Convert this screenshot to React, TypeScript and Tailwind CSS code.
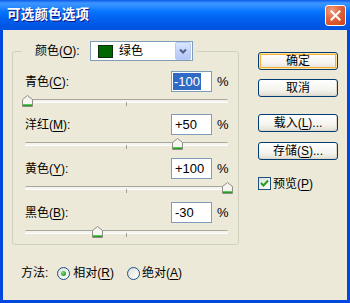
import React from "react";

const rows = [
  { label: "青色", k: "C", value: "-100", selected: true, thumb: "left-[-3px]", block: "h-[22px]" },
  { label: "洋红", k: "M", value: "+50", selected: false, thumb: "left-[147px]", block: "h-[23px]" },
  { label: "黄色", k: "Y", value: "+100", selected: false, thumb: "left-[197px]", block: "h-[23px]" },
  { label: "黑色", k: "B", value: "-30", selected: false, thumb: "left-[67px]", block: "h-[23px]" },
];

function Mn({ k }: { k: string }) {
  return (
    <>
      (<span className="underline underline-offset-[2px] decoration-[1px]">{k}</span>)
    </>
  );
}

function Thumb() {
  return (
    <svg width="11" height="12" viewBox="0 0 11 12">
      <path d="M0.5 4.5 L5.5 0.5 L10.5 4.5 V11.5 H0.5 Z" fill="#F6F5F0" stroke="#8E8D88" />
      <rect x="1" y="9" width="9" height="1" fill="#5CC65C" />
      <rect x="1" y="10" width="9" height="1" fill="#21A121" />
    </svg>
  );
}

function Btn({ children, def }: { children: React.ReactNode; def?: boolean }) {
  return (
    <div
      className={
        def
          ? "w-[80px] h-[18px] rounded-[3px] border border-[#003C74] flex items-center justify-center text-[12px] leading-none text-black bg-[linear-gradient(to_bottom,#FFFFFF_0%,#F5F4EF_60%,#E6E4DA_90%,#D6D0C5_100%)] shadow-[inset_0_0_0_1px_#FFE6A0,inset_0_0_0_2px_#F4B13E]"
          : "w-[80px] h-[18px] rounded-[3px] border border-[#003C74] flex items-center justify-center text-[12px] leading-none text-black bg-[linear-gradient(to_bottom,#FFFFFF_0%,#F5F4EF_60%,#E6E4DA_90%,#D6D0C5_100%)] shadow-[inset_-1px_-1px_0_#DCD8CB]"
      }
    >
      {children}
    </div>
  );
}

function Radio({ checked }: { checked?: boolean }) {
  return (
    <div className="w-[13px] h-[13px] rounded-full border border-[#1C5180] bg-[linear-gradient(135deg,#DCDCD7_0%,#F4F4F0_60%,#FFFFFF_100%)] flex items-center justify-center">
      {checked && (
        <div className="w-[5px] h-[5px] rounded-full bg-[radial-gradient(circle_at_35%_35%,#7BE07B_0%,#21A121_70%)]" />
      )}
    </div>
  );
}

export default function App() {
  return (
    <div className="w-[350px] h-[303px] flex flex-col bg-[#0348DC] font-['Liberation_Sans','Noto_Sans_CJK_SC',sans-serif] text-[12px] leading-none text-black overflow-hidden">
      {/* title bar */}
      <div className="h-[30px] shrink-0 flex items-center justify-between pl-[7px] pr-[4px] bg-[linear-gradient(to_bottom,#0A5AE8_0%,#3D95FF_10%,#2B8CFF_22%,#127DFF_32%,#036FFC_45%,#0262EE_62%,#0057E5_82%,#0053E0_100%)]">
        <span className="text-white font-bold text-[13.5px] tracking-[0.2px] [text-shadow:1px_1px_0_#0A1A8A]">
          可选颜色选项
        </span>
        <div className="w-[21px] h-[21px] rounded-[3px] border border-white bg-[radial-gradient(circle_at_30%_25%,#F0A080_0%,#E0643C_45%,#C8401C_100%)] flex items-center justify-center">
          <svg width="11" height="11" viewBox="0 0 11 11">
            <path d="M1.5 1.5 L9.5 9.5 M9.5 1.5 L1.5 9.5" stroke="white" strokeWidth="2" strokeLinecap="square" />
          </svg>
        </div>
      </div>

      {/* client */}
      <div className="mx-[3px] mb-[3px] h-[270px] bg-[#ECE9D8] flex items-start">
        {/* left column */}
        <div className="ml-[9px] mt-[11px] w-[227px] flex flex-col">
          <fieldset className="h-[204px] border border-[#D0D0BF] rounded-[3px] pl-[12px] pr-[10px] m-0 min-w-0">
            <legend className="ml-[-3px] pl-[13px] pr-[3px]">
              <div className="h-[20px] flex items-center">
                <span className="w-[55px]">
                  颜色<Mn k="O" />:
                </span>
                <div className="w-[103px] h-[20px] border border-[#7F9DB9] bg-white flex items-center">
                  <div className="ml-[7px] w-[15px] h-[13px] bg-[#006600] border border-[#0A2E0A]" />
                  <span className="ml-[6px]">绿色</span>
                  <div className="ml-auto mr-[1px] w-[16px] h-[18px] rounded-[2px] border border-[#B9CAF3] bg-[linear-gradient(to_bottom,#DCE6FD_0%,#C3D3FB_50%,#B4C7F5_100%)] flex items-center justify-center">
                    <svg width="8" height="6" viewBox="0 0 8 6">
                      <path d="M1 1.5 L4 4.5 L7 1.5" fill="none" stroke="#4D6185" strokeWidth="2" />
                    </svg>
                  </div>
                </div>
              </div>
            </legend>
            <div className="pt-[10px] flex flex-col">
              {rows.map((r) => (
                <div key={r.k} className="flex flex-col">
                  <div className="h-[21px] flex items-center">
                    <span className="flex-1">
                      {r.label}
                      <Mn k={r.k} />:
                    </span>
                    <div className="w-[41px] h-[21px] border border-[#7F9DB9] bg-white flex items-center pl-[1px] text-[13px]">
                      {r.selected ? (
                        <span className="bg-[#316AC5] text-white h-[17px] flex items-center pl-[1px] pr-[1px]">{r.value}</span>
                      ) : (
                        <span className="pl-[2px]">{r.value}</span>
                      )}
                    </div>
                    <span className="ml-[5px] w-[11px] text-[13px]">%</span>
                  </div>
                  <div className={`relative ${r.block}`}>
                    <div className="absolute left-0 top-[7px] w-[203px] h-[3px] rounded-[2px] border-t border-[#A9A79C] bg-[#F4F3EE] shadow-[0_1px_0_#FFFFFF]" />
                    <div className="absolute left-[101px] top-[10px] w-[1px] h-[4px] bg-[#A3A195]" />
                    <div className={`absolute top-[3px] ${r.thumb}`}>
                      <Thumb />
                    </div>
                  </div>
                </div>
              ))}
            </div>
          </fieldset>
          <div className="mt-[20px] h-[16px] pl-[9px] flex items-center">
            <span>方法:</span>
            <div className="ml-[9px]">
              <Radio checked />
            </div>
            <span className="ml-[3px]">
              相对<Mn k="R" />
            </span>
            <div className="ml-[13px]">
              <Radio />
            </div>
            <span className="ml-[2px]">
              绝对<Mn k="A" />
            </span>
          </div>
        </div>

        {/* right column */}
        <div className="ml-[19px] mt-[22px] flex flex-col">
          <Btn def>确定</Btn>
          <div className="mt-[9px]">
            <Btn>取消</Btn>
          </div>
          <div className="mt-[17px]">
            <Btn>
              载入<Mn k="L" />...
            </Btn>
          </div>
          <div className="mt-[10px]">
            <Btn>
              存储<Mn k="S" />...
            </Btn>
          </div>
          <div className="mt-[17px] h-[13px] flex items-center">
            <div className="w-[13px] h-[13px] border border-[#1C5180] bg-[linear-gradient(135deg,#DCDCD7_0%,#F4F4F0_60%,#FFFFFF_100%)] flex items-center justify-center">
              <svg width="9" height="9" viewBox="0 0 9 9">
                <path d="M1 4 L3.5 6.5 L8 1.5" fill="none" stroke="#21A121" strokeWidth="2" />
              </svg>
            </div>
            <span className="ml-[2px]">
              预览<Mn k="P" />
            </span>
          </div>
        </div>
      </div>
    </div>
  );
}
